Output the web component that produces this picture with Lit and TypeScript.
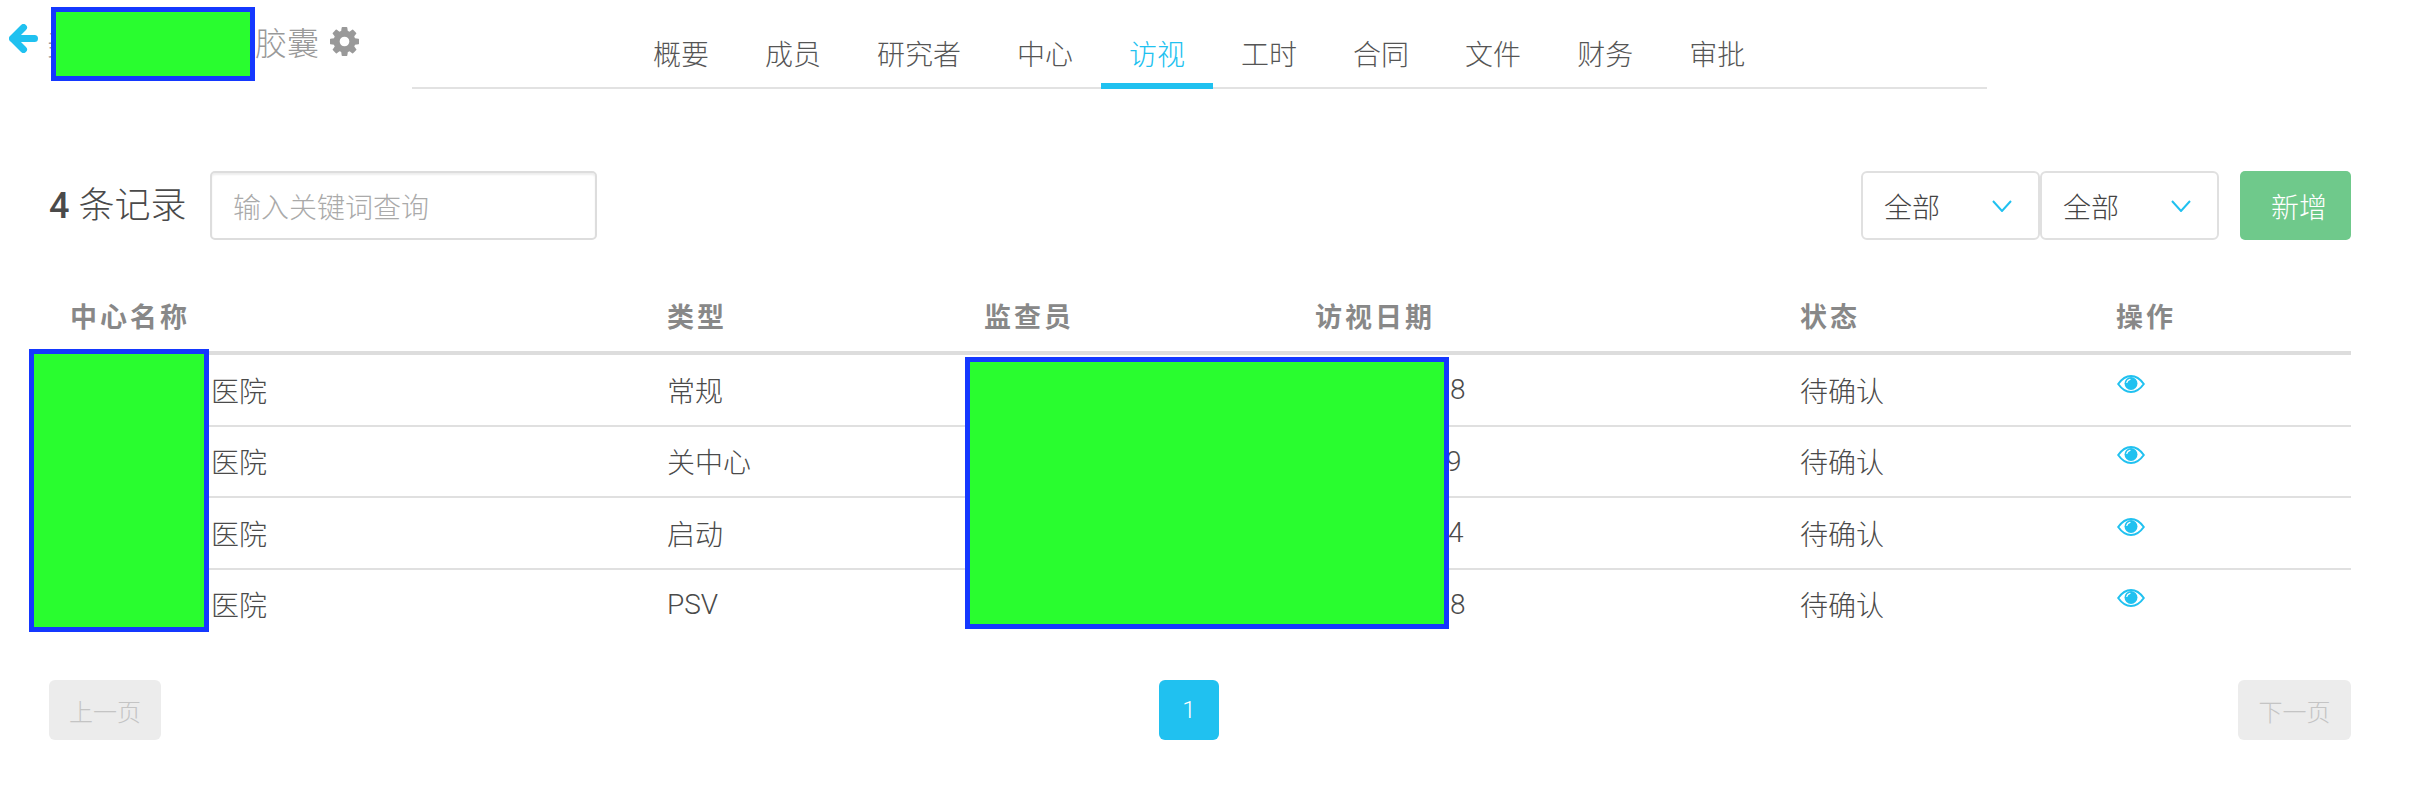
import { css, html, LitElement, svg } from 'lit';
import { customElement } from 'lit/decorators.js';

const TABS = ['概要', '成员', '研究者', '中心', '访视', '工时', '合同', '文件', '财务', '审批'];

// the name and date columns are covered by the masks, only the tail shows
const ROWS = [
  { type: '常规', digit: '8', pad: 135 },
  { type: '关中心', digit: '9', pad: 131 },
  { type: '启动', digit: '4', pad: 133 },
  { type: 'PSV', digit: '8', pad: 135 },
];

const COG =
  'M1024 768q0-106-75-181t-181-75-181 75-75 181 75 181 181 75 181-75 75-181zm512-109v222q0 12-8 23t-20 13l-185 28q-19 54-39 91 35 50 107 138 10 12 10 25t-9 23q-27 37-99 108t-94 71q-12 0-26-9l-138-108q-44 23-91 38-16 136-29 186-7 28-36 28h-222q-14 0-24.500-8.500t-11.500-21.500l-28-184q-49-16-90-37l-141 107q-10 9-25 9-14 0-25-11-126-114-165-168-7-10-7-23 0-12 8-23 15-21 51-66.500t54-70.500q-27-50-41-99l-183-27q-13-2-21-12.500t-8-23.500v-222q0-12 8-23t19-13l186-28q14-46 39-92-40-57-107-138-10-12-10-24 0-10 9-23 26-36 98.500-107.500t94.500-71.500q13 0 26 10l138 107q44-23 91-38 16-136 29-186 7-28 36-28h222q14 0 24.500 8.500t11.500 21.500l28 184q49 16 90 37l142-107q9-9 24-9 13 0 25 10 129 119 165 170 7 8 7 22 0 12-8 23-15 21-51 66.500t-54 70.500q26 50 41 98l183 28q13 2 21 12.500t8 23.500z';

const eye = svg`
  <svg class="eye" viewBox="0 0 28 18" width="28" height="18">
    <path d="M1.2 9C5 3.600 9 1 14 1s9 2.600 12.800 8C23 14.400 19 17 14 17S5 14.400 1.200 9z" fill="#fff" stroke="#20c1f0" stroke-width="2"/>
    <circle cx="14" cy="8.500" r="6.500" fill="#20c1f0"/>
    <path d="M9.800 7.500c.4-1.700 1.500-2.800 3.200-3.200" fill="none" stroke="#fff" stroke-width="1.200" stroke-linecap="round"/>
  </svg>
`;

const chevron = svg`
  <svg class="chevron" viewBox="0 0 20 12" width="20" height="12">
    <path d="M1 1l9 10 9-10" fill="none" stroke="#20c1f0" stroke-width="2"/>
  </svg>
`;

@customElement('app-root')
export class AppRoot extends LitElement {
  static override styles = css`
    :host {
      display: block;
      position: relative;
      height: 810px;
      background: #fff;
      color: #555;
      font-family: Roboto, 'Noto Sans CJK SC', sans-serif;
      font-weight: 300;
      font-size: 28px;
    }

    .header {
      display: flex;
      height: 89px;
    }
    .title {
      display: flex;
      align-items: flex-start;
      box-sizing: border-box;
      width: 412px;
      padding: 24px 0 0 9px;
    }
    .back {
      flex: none;
    }
    .title-text {
      display: flex;
      margin-left: 9px;
      font-size: 32px;
      line-height: 40px;
      color: #999;
    }
    .title-gap {
      width: 176px;
    }
    .cog {
      flex: none;
      margin: 3px 0 0 11px;
      fill: #999;
    }

    .nav {
      display: flex;
      box-sizing: border-box;
      width: 1575px;
      height: 89px;
      padding-left: 213px;
      border-bottom: 2px solid #e2e2e2;
    }
    .tab {
      flex: none;
      box-sizing: border-box;
      height: 89px;
      padding: 36px 28px 0;
      line-height: 40px;
      border-bottom: 6px solid transparent;
    }
    .tab--active {
      color: #20c1f0;
      border-bottom-color: #20c1f0;
    }

    .toolbar {
      display: flex;
      align-items: stretch;
      height: 69px;
      margin: 82px 73px 0 49px;
    }
    .count {
      display: flex;
      align-items: center;
      gap: 9px;
      width: 161px;
      font-size: 36px;
      line-height: 36px;
      color: #4a4a4a;
    }
    .count b {
      font-weight: 500;
    }
    .search {
      display: flex;
      align-items: center;
      box-sizing: border-box;
      width: 387px;
      padding-left: 21px;
      border: 2px solid #ddd;
      border-radius: 5px;
      box-shadow: inset 0 2px 2px #eee;
      color: #aaa;
    }
    .select {
      display: flex;
      align-items: center;
      justify-content: space-between;
      box-sizing: border-box;
      width: 179px;
      padding: 0 26px 0 21px;
      border: 2px solid #e0e0e0;
      border-radius: 6px;
      color: #444;
    }
    .search + .select {
      margin-left: auto;
    }
    .add {
      display: flex;
      align-items: center;
      box-sizing: border-box;
      width: 111px;
      margin-left: 21px;
      padding-left: 31px;
      border-radius: 5px;
      background: #6fc98b;
      color: #fff;
    }

    .table {
      margin: 0 73px 0 49px;
      color: #4a4a4a;
    }
    .row {
      display: grid;
      grid-template-columns: 597px 317px 331px 485px 316px 256px;
      box-sizing: border-box;
      height: 71.5px;
      border-top: 2px solid #e0e0e0;
      align-items: center;
    }
    .row--head {
      height: 115px;
      padding-bottom: 15px;
      border-top: 0;
      border-bottom: 4px solid #ddd;
      align-items: end;
      color: #888;
      font-size: 27px;
      font-weight: 700;
      letter-spacing: 3px;
      line-height: 36px;
    }
    .row--head + .row {
      height: 69.500px;
      border-top: 0;
    }
    .cell {
      padding-left: 21px;
      white-space: nowrap;
    }
    .name-gap {
      display: inline-block;
      width: 141px;
    }
    .eye {
      display: block;
      margin: -12px 0 0 1px;
    }

    .pager {
      display: flex;
      margin: 41px 73px 0 49px;
    }
    .page-btn {
      display: flex;
      align-items: center;
      justify-content: center;
      width: 112px;
      height: 60px;
      border-radius: 6px;
      background: #ececec;
      color: #c4c4c4;
      font-size: 24px;
    }
    .page-num {
      display: flex;
      align-items: center;
      justify-content: center;
      width: 60px;
      height: 60px;
      margin-left: 998px;
      border-radius: 6px;
      background: #20c1f0;
      color: #fff;
      font-size: 24px;
    }
    .page-btn--next {
      width: 113px;
      margin-left: auto;
    }

    .mask {
      position: absolute;
      box-sizing: border-box;
      border: 5px solid #1438ff;
      background: #29fd2f;
    }
    .mask--title {
      left: 51px;
      top: 7px;
      width: 204px;
      height: 74px;
    }
    .mask--center {
      left: 29px;
      top: 349px;
      width: 180px;
      height: 283px;
    }
    .mask--people {
      left: 965px;
      top: 357px;
      width: 484px;
      height: 272px;
    }
  `;

  override render() {
    return html`
      <div class="header">
        <div class="title">
          <svg class="back" viewBox="0 0 29 29" width="29" height="29">
            <path d="M14.500 3.500L3.500 14.500l11 11M3.500 14.500h22" fill="none" stroke="#20c1f0" stroke-width="7" stroke-linecap="round" stroke-linejoin="round"/>
          </svg>
          <div class="title-text">
            <span>美</span><span class="title-gap"></span><span>胶囊</span>
          </div>
          <svg class="cog" viewBox="0 0 1536 1536" width="29" height="29">
            <path d=${COG} fill-rule="evenodd"/>
          </svg>
        </div>
        <div class="nav">
          ${TABS.map(
            tab =>
              html`<div class="tab ${tab === '访视' ? 'tab--active' : ''}">${tab}</div>`
          )}
        </div>
      </div>

      <div class="toolbar">
        <div class="count"><b>4</b><span>条记录</span></div>
        <div class="search">输入关键词查询</div>
        <div class="select"><span>全部</span>${chevron}</div>
        <div class="select"><span>全部</span>${chevron}</div>
        <div class="add">新增</div>
      </div>

      <div class="table">
        <div class="row row--head">
          <div class="cell">中心名称</div>
          <div class="cell">类型</div>
          <div class="cell">监查员</div>
          <div class="cell">访视日期</div>
          <div class="cell">状态</div>
          <div class="cell">操作</div>
        </div>
        ${ROWS.map(
          row => html`
            <div class="row">
              <div class="cell"><span class="name-gap"></span>医院</div>
              <div class="cell">${row.type}</div>
              <div class="cell"></div>
              <div class="cell">
                <span class="name-gap" style="width: ${row.pad}px"></span>${row.digit}
              </div>
              <div class="cell">待确认</div>
              <div class="cell">${eye}</div>
            </div>
          `
        )}
      </div>

      <div class="pager">
        <div class="page-btn">上一页</div>
        <div class="page-num">1</div>
        <div class="page-btn page-btn--next">下一页</div>
      </div>

      <div class="mask mask--title"></div>
      <div class="mask mask--center"></div>
      <div class="mask mask--people"></div>
    `;
  }
}
